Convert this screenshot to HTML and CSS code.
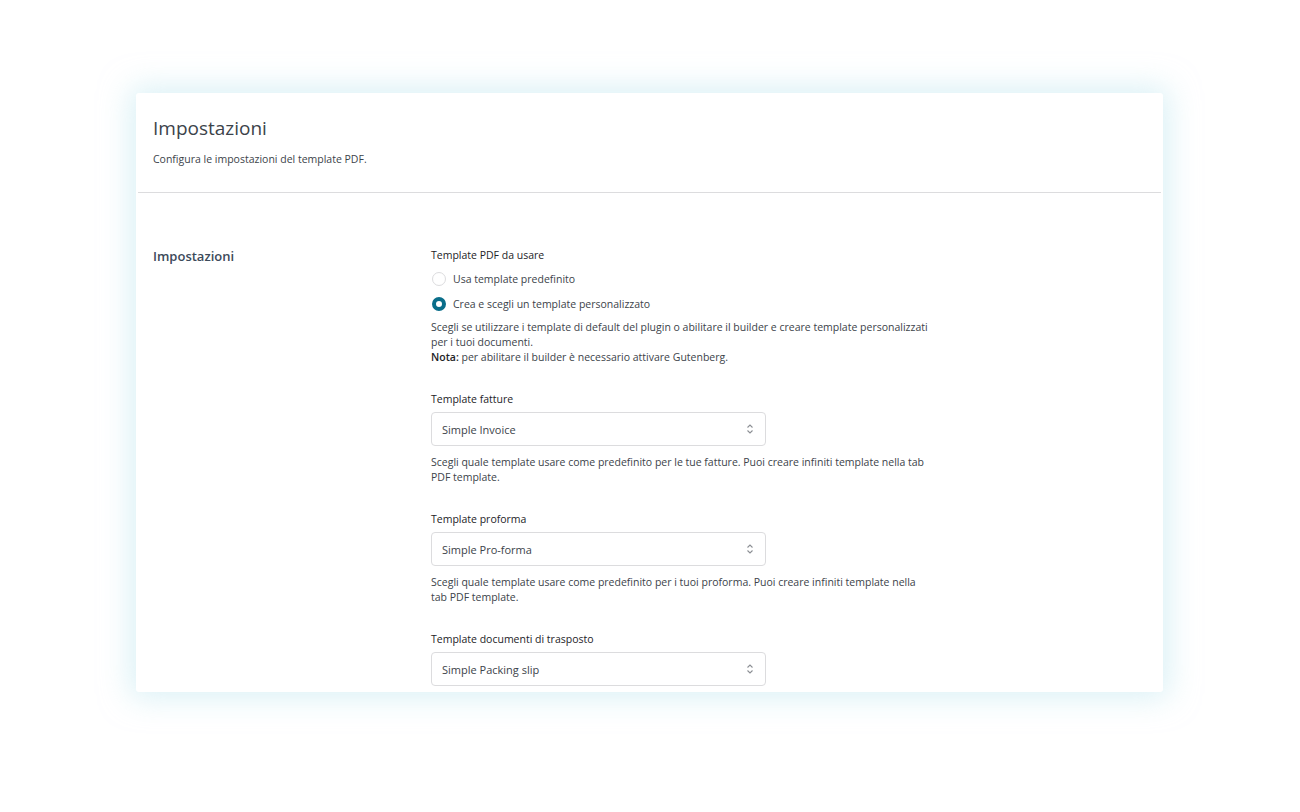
FILE: index.html
```html
<!DOCTYPE html>
<html lang="it">
<head>
<meta charset="utf-8">
<title>Impostazioni</title>
<link rel="stylesheet" href="styles.css">
</head>
<body>
<div class="page">
  <div class="card">
    <header class="card-head">
      <h1 class="title">Impostazioni</h1>
      <p class="subtitle">Configura le impostazioni del template PDF.</p>
    </header>
    <div class="section">
      <div class="section-label">Impostazioni</div>
      <div class="fields">
        <div class="field">
          <div class="label">Template PDF da usare</div>
          <label class="radio"><span class="dot"></span>Usa template predefinito</label>
          <label class="radio"><span class="dot checked"></span>Crea e scegli un template personalizzato</label>
          <p class="desc">Scegli se utilizzare i template di default del plugin o abilitare il builder e creare template personalizzati per i tuoi documenti.<br><strong>Nota:</strong> per abilitare il builder è necessario attivare Gutenberg.</p>
        </div>
        <div class="field">
          <div class="label label-select">Template fatture</div>
          <div class="select"><span>Simple Invoice</span><svg class="chev" viewBox="0 0 10 14" width="10" height="14"><path d="M2.5 5.5 L5 3 L7.5 5.5 M2.5 8.5 L5 11 L7.5 8.5" fill="none" stroke="#8c8f94" stroke-width="1.1"/></svg></div>
          <p class="desc">Scegli quale template usare come predefinito per le tue fatture. Puoi creare infiniti template nella tab PDF template.</p>
        </div>
        <div class="field">
          <div class="label label-select">Template proforma</div>
          <div class="select"><span>Simple Pro-forma</span><svg class="chev" viewBox="0 0 10 14" width="10" height="14"><path d="M2.5 5.5 L5 3 L7.5 5.5 M2.5 8.5 L5 11 L7.5 8.5" fill="none" stroke="#8c8f94" stroke-width="1.1"/></svg></div>
          <p class="desc">Scegli quale template usare come predefinito per i tuoi proforma. Puoi creare infiniti template nella tab PDF template.</p>
        </div>
        <div class="field">
          <div class="label label-select">Template documenti di trasposto</div>
          <div class="select"><span>Simple Packing slip</span><svg class="chev" viewBox="0 0 10 14" width="10" height="14"><path d="M2.5 5.5 L5 3 L7.5 5.5 M2.5 8.5 L5 11 L7.5 8.5" fill="none" stroke="#8c8f94" stroke-width="1.1"/></svg></div>
        </div>
      </div>
    </div>
  </div>
</div>
</body>
</html>
```
FILE: styles.css
```css
* { box-sizing: border-box; }
html, body { margin: 0; padding: 0; background: #ffffff; }
body {
  font-family: "Open Sans", "Noto Sans", sans-serif;
  color: #3c434a;
  width: 1300px;
  height: 812px;
  overflow: hidden;
}
.page {
  padding: 93px 137px 0 136px;
}
.card {
  background: #fff;
  height: 599px;
  overflow: hidden;
  border-radius: 3px;
  box-shadow: 0 0 30px 6px rgba(190, 230, 238, 0.55);
}
.card-head {
  padding: 21px 15px 25px 15px;
  margin: 0 2px;
  border-bottom: 1px solid #dcdcde;
}
.title {
  margin: 0;
  font-size: 19px;
  font-weight: 400;
  line-height: 28px;
  color: #3c434a;
}
.subtitle {
  margin: 9px 0 0;
  font-size: 10.5px;
  line-height: 16px;
  color: #3c434a;
}
.section {
  display: flex;
  padding: 54px 17px 0 17px;
}
.section-label {
  width: 278px;
  font-size: 13px;
  font-weight: 600;
  color: #3c4a5a;
  line-height: 18px;
}
.fields {
  display: flex;
  flex-direction: column;
  gap: 26px;
}
.field {
  display: flex;
  flex-direction: column;
}
.label {
  font-size: 10.5px;
  line-height: 16px;
  color: #1d2327;
  margin-bottom: 8px;
}
.label-select {
  margin-bottom: 5px;
}
.radio {
  display: flex;
  align-items: center;
  font-size: 10.5px;
  line-height: 16px;
  color: #3c434a;
  margin-bottom: 9px;
}
.dot {
  width: 14px;
  height: 14px;
  border-radius: 50%;
  border: 1px solid #dcdcde;
  margin: 0 7px 0 1px;
  flex: none;
}
.dot.checked {
  border: 4px solid #0a6e8a;
  background: #fff;
}
.desc {
  margin: -1px 0 0;
  font-size: 10.5px;
  line-height: 15px;
  color: #3c434a;
  max-width: 503px;
}
.desc strong { font-weight: 600; color: #1d2327; }
.select {
  width: 335px;
  height: 34px;
  border: 1px solid #dcdcde;
  border-radius: 4px;
  display: flex;
  align-items: center;
  justify-content: space-between;
  padding: 0 10px 0 10px;
  font-size: 11px;
  color: #3c434a;
  margin-bottom: 10px;
}
.chev { flex: none; }
```
